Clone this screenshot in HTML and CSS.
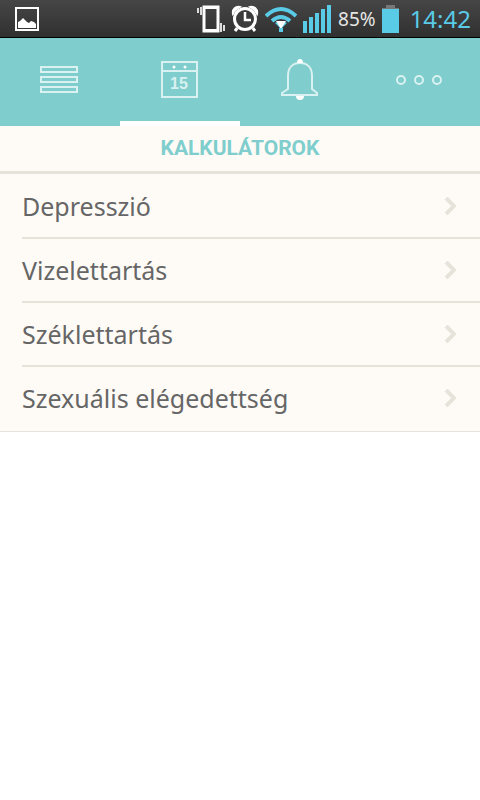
FILE: index.html
```
<!DOCTYPE html>
<html lang="hu">
<head>
    <meta charset="UTF-8">
    <meta name="viewport" content="width=device-width, initial-scale=1.0">
    <title>Kalkulátorok</title>
    <link rel="stylesheet" href="styles.css">
</head>
<body>
    <div class="status-bar">
        <svg class="status-picture" width="24" height="24" viewBox="0 0 24 24">
            <rect x="1" y="1" width="22" height="22" fill="none" stroke="#fff" stroke-width="2"/>
            <path d="M3 21v-6l2-1 3-3 4 4 2 1 2-2 3 1 2 2v4z" fill="#fff"/>
        </svg>
        <div class="status-icons">
            <!-- vibrate -->
            <svg width="28" height="28" viewBox="0 0 28 28">
                <path d="M7 2h14v24H7z" fill="none" stroke="#fff" stroke-width="3"/>
                <path d="M6 2.5h16M6 25.5h16" stroke="#fff" stroke-width="3"/>
                <path d="M1 3v5M4 2v8M24 18v9M27 20v6" stroke="#ddd" stroke-width="2"/>
            </svg>
            <!-- alarm -->
            <svg width="28" height="28" viewBox="0 0 28 28">
                <path d="M2 9C1 4 5 1 9 2zM26 9c1-5-3-8-7-7z" fill="#fff" stroke="#fff" stroke-width="2"/>
                <path d="M7 22l-3 4M21 22l3 4" stroke="#fff" stroke-width="3"/>
                <circle cx="14" cy="14" r="12" fill="#3b3b3b"/>
                <circle cx="14" cy="14" r="10.5" fill="none" stroke="#fff" stroke-width="3"/>
                <path d="M14 7v8h6" fill="none" stroke="#fff" stroke-width="2.5"/>
            </svg>
            <!-- wifi -->
            <svg width="32" height="28" viewBox="0 0 32 28">
                <path d="M1 11Q16-3 31 11M7 16q9-8 18 0" fill="none" stroke="#5acbe6" stroke-width="4"/>
                <path d="M10 18q6-4 12 0l-6 6z" fill="#5acbe6"/>
                <path d="M11 16h10l-5 8z" fill="#fff"/>
                <path d="M14 23h4v4h-4z" fill="#5acbe6"/>
            </svg>
            <!-- signal -->
            <svg width="28" height="28" viewBox="0 0 28 28">
                <path d="M0 16h4v12H0zM6 12h4v16H6zM12 8h4v20h-4zM18 4h4v24h-4zM24 0h4v28h-4z" fill="#5acbe6"/>
            </svg>
        </div>
        <span class="battery-level">85%</span>
        <svg width="17" height="28" viewBox="0 0 17 28">
            <path d="M4 0h9v3h4v2H0V3h4z" fill="#777"/>
            <path d="M0 4h17v24H0z" fill="#5acbe6"/>
        </svg>
        <span class="clock">14:42</span>
    </div>

    <nav class="tabs">
        <button class="tab" type="button" aria-label="Lista">
            <svg width="42" height="40" viewBox="0 0 42 40">
                <path d="M2 7h36v5H2zM2 17h36v5H2zM2 27h36v5H2z"/>
            </svg>
        </button>
        <button class="tab active" type="button" aria-label="Naptár">
            <svg width="40" height="40" viewBox="0 0 40 40">
                <path d="M2 2h35v35H2zM2 11h35"/>
                <circle class="solid" cx="14" cy="7" r="1.5"/>
                <circle class="solid" cx="25" cy="7" r="1.5"/>
                <text x="19" y="29">15</text>
            </svg>
        </button>
        <button class="tab" type="button" aria-label="Értesítések">
            <svg width="40" height="42" viewBox="0 0 40 42">
                <path d="M8 30V17C8 8 13 4 20 4s12 4 12 13v13l5 4v2H2v-2z"/>
                <path class="solid" d="M17 4q0-4 3-4t3 4zM16 37h8q0 4-4 4t-4-4z"/>
            </svg>
        </button>
        <button class="tab" type="button" aria-label="Továbbiak">
            <svg width="48" height="40" viewBox="0 0 48 40">
                <circle cx="5" cy="20" r="4"/>
                <circle cx="23" cy="20" r="4"/>
                <circle cx="41" cy="20" r="4"/>
            </svg>
        </button>
    </nav>

    <main class="content">
        <h1 class="title">KALKULÁTOROK</h1>
        <ul class="list">
            <li><a href="#">Depresszió <svg width="12" height="18" viewBox="0 0 12 18"><path d="M2 1l8 8-8 8"/></svg></a></li>
            <li><a href="#">Vizelettartás <svg width="12" height="18" viewBox="0 0 12 18"><path d="M2 1l8 8-8 8"/></svg></a></li>
            <li><a href="#">Széklettartás <svg width="12" height="18" viewBox="0 0 12 18"><path d="M2 1l8 8-8 8"/></svg></a></li>
            <li><a href="#">Szexuális elégedettség <svg width="12" height="18" viewBox="0 0 12 18"><path d="M2 1l8 8-8 8"/></svg></a></li>
        </ul>
    </main>
</body>
</html>
```
FILE: styles.css
```
* {
    box-sizing: border-box;
}
body {
    margin: 0;
    background-color: #fff;
    font-family: "Noto Sans", sans-serif;
}
svg {
    display: block;
    flex: none;
}
.status-bar {
    display: flex;
    align-items: center;
    height: 38px;
    padding: 0 9px 0 15px;
    background: linear-gradient(#464646, #303030);
    border-bottom: 1px solid #000;
}
.status-icons {
    display: flex;
    gap: 6px;
    margin-left: auto;
}
.battery-level {
    margin: 0 6px 0 7px;
    color: #e6e6e6;
    font-size: 19px;
}
.clock {
    margin-left: 11px;
    color: #5acbe6;
    font-size: 24px;
}
.tabs {
    display: flex;
    height: 88px;
    background-color: #7fcecd;
}
.tab {
    display: flex;
    flex: 1;
    align-items: center;
    justify-content: center;
    padding: 0;
    border: 0;
    border-bottom: 5px solid transparent;
    background: none;
}
.tab.active {
    border-bottom-color: #fff;
}
.tab svg {
    fill: none;
    stroke: #d9f1f0;
    stroke-width: 2;
}
.tab .solid {
    fill: #fff;
    stroke: none;
}
.tab text {
    fill: #d9f1f0;
    stroke: none;
    font-family: "Liberation Sans", sans-serif;
    font-size: 16px;
    font-weight: bold;
    text-anchor: middle;
}
.content {
    background-color: #fefbf6;
    border-bottom: 1px solid #e6e4da;
}
.title {
    margin: 0;
    border-bottom: 3px solid #e6e4da;
    color: #7fcecd;
    font-family: Roboto, sans-serif;
    font-size: 21px;
    line-height: 45px;
    text-align: center;
}
.list {
    margin: 0;
    padding: 1px 0 2px 22px;
    list-style: none;
}
.list li + li {
    border-top: 2px solid #e6e4da;
}
.list a {
    display: flex;
    align-items: center;
    justify-content: space-between;
    padding-right: 24px;
    color: #666;
    font-size: 25px;
    line-height: 62px;
    text-decoration: none;
}
.list svg {
    fill: none;
    stroke: #e6e4da;
    stroke-width: 4;
}
```
